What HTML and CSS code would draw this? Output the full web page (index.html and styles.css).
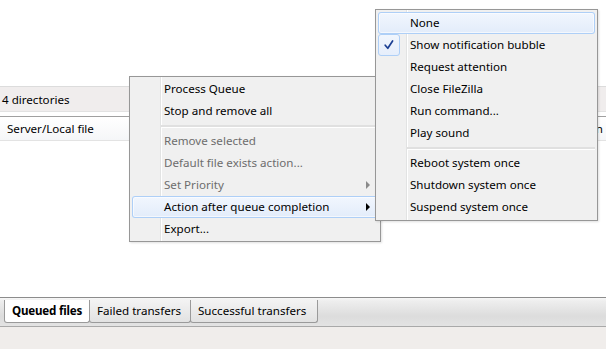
FILE: index.html
```html
<!DOCTYPE html>
<html>
<head>
<meta charset="utf-8">
<link rel="stylesheet" href="styles.css">
</head>
<body>
<div class="app">
  <div class="top"></div>
  <div class="status">4 directories</div>
  <div class="gap"></div>
  <div class="header">
    <div class="hcell">Server/Local file</div>
    <div class="hcell last">Direction</div>
  </div>
  <div class="list"></div>
  <div class="tabbar">
    <div class="tab sel t1">Queued files</div>
    <div class="tab t2">Failed transfers</div>
    <div class="tab t3">Successful transfers</div>
  </div>
  <div class="footer"></div>

  <div class="menu main">
    <div class="item"><span class="ico"></span><span class="txt">Process Queue</span></div>
    <div class="item"><span class="ico"></span><span class="txt">Stop and remove all</span></div>
    <div class="sep"></div>
    <div class="item dis"><span class="ico"></span><span class="txt">Remove selected</span></div>
    <div class="item dis"><span class="ico"></span><span class="txt">Default file exists action...</span></div>
    <div class="item dis"><span class="ico"></span><span class="txt">Set Priority</span><span class="arrow"></span></div>
    <div class="item hot"><span class="ico"></span><span class="txt">Action after queue completion</span><span class="arrow"></span></div>
    <div class="item"><span class="ico"></span><span class="txt">Export...</span></div>
  </div>

  <div class="menu sub">
    <div class="item hot"><span class="ico"></span><span class="txt">None</span></div>
    <div class="item"><span class="ico checked"><svg width="12" height="12" viewBox="0 0 12 12"><path d="M2.2 6.2 L4.8 9.3 L9.6 2" fill="none" stroke="#1b3f93" stroke-width="1.7" stroke-linecap="round" stroke-linejoin="round"/></svg></span><span class="txt">Show notification bubble</span></div>
    <div class="item"><span class="ico"></span><span class="txt">Request attention</span></div>
    <div class="item"><span class="ico"></span><span class="txt">Close FileZilla</span></div>
    <div class="item"><span class="ico"></span><span class="txt">Run command...</span></div>
    <div class="item"><span class="ico"></span><span class="txt">Play sound</span></div>
    <div class="sep"></div>
    <div class="item"><span class="ico"></span><span class="txt">Reboot system once</span></div>
    <div class="item"><span class="ico"></span><span class="txt">Shutdown system once</span></div>
    <div class="item"><span class="ico"></span><span class="txt">Suspend system once</span></div>
  </div>
</div>
</body>
</html>
```

FILE: styles.css
```css
* { box-sizing: border-box; }
html, body {
  margin: 0;
  padding: 0;
  width: 606px;
  height: 349px;
  overflow: hidden;
  background: #fff;
}
.app {
  position: relative;
  width: 606px;
  height: 349px;
  display: flex;
  flex-direction: column;
  font-family: "Noto Sans", "Open Sans", sans-serif;
  font-size: 11.6px;
  color: #000;
}
.top { height: 86px; flex: none; background: #fff; }
.status {
  height: 26px;
  flex: none;
  border-top: 1px solid #dcdcdc;
  border-bottom: 1px solid #e2e2e2;
  background: #f0eded;
  padding-left: 2px;
  display: flex;
  align-items: center;
}
.gap { height: 4px; flex: none; background: #fff; }
.header {
  height: 25px;
  flex: none;
  border-top: 1px solid #a0a0a0;
  border-bottom: 1px solid #e3e3e3;
  background: linear-gradient(#ffffff, #f5f6f8);
  display: flex;
  align-items: center;
}
.hcell { padding-left: 7px; }
.hcell.last { margin-left: auto; padding-right: 3px; }
.list { flex: 1; background: #fff; }
.tabbar {
  height: 30px;
  flex: none;
  border-top: 1px solid #8c8c8c;
  border-bottom: 1px solid #a9a9a9;
  background: linear-gradient(#f7f7f7 0px, #eeeeee 3px, #dcdcdc 65%, #e3e3e3 100%);
  display: flex;
  align-items: flex-start;
  padding-left: 4px;
  padding-top: 2px;
}
.tab {
  height: 23px;
  padding: 0 0 1px 7px;
  display: flex;
  align-items: center;
  border: 1px solid #9a9a9a;
  border-top: none;
  border-radius: 0 0 3px 3px;
  background: linear-gradient(#f3f3f3, #e2e2e2);
  margin-left: -1px;
  white-space: nowrap;
  overflow: hidden;
}
.tab.t1 { margin-left: 0; width: 86px; }
.tab.t2 { width: 102px; }
.tab.t3 { width: 128px; }
.tab.sel {
  background: #fff;
  font-weight: bold;
  letter-spacing: -0.2px;
}
.footer { height: 22px; flex: none; background: #f0edeb; }

.menu {
  position: absolute;
  background:
    linear-gradient(to right, transparent 30px, #e2e3e3 30px, #e2e3e3 31px, #ffffff 31px, #ffffff 32px, transparent 32px),
    #f0f0f0;
  border: 1px solid #979797;
  box-shadow: 1px 1px 2px rgba(0,0,0,0.12);
}
.menu.main { left: 129px; top: 76px; width: 252px; padding: 1px 2px 1px 2px; }
.menu.sub { left: 375px; top: 9px; width: 223px; padding: 2px 2px; }
.item {
  height: 22px;
  display: flex;
  align-items: center;
  border-radius: 3px;
  white-space: nowrap;
}
.item.dis { color: #6d6d6d; }
.item.hot {
  background: linear-gradient(#f2f7fe, #e2ecfa);
  box-shadow: inset 0 0 0 1px #aecff7, inset 0 0 0 2px rgba(255,255,255,0.6);
}
.ico {
  width: 22px;
  height: 22px;
  flex: none;
  margin-right: 10px;
  display: flex;
  align-items: center;
  justify-content: center;
}
.ico.checked {
  border: 1px solid #aecff7;
  border-radius: 3px;
  background: linear-gradient(#f1f6fd, #e6eefb);
}
.txt { flex: none; padding-bottom: 1px; }
.arrow {
  margin-left: auto;
  margin-right: 8px;
  width: 0;
  height: 0;
  border-top: 4px solid transparent;
  border-bottom: 4px solid transparent;
  border-left: 4px solid #000;
}
.item.dis .arrow { border-left-color: #8a8a8a; }
.sep {
  height: 8px;
  margin-left: 29px;
  display: flex;
  flex-direction: column;
  justify-content: center;
}
.sep::before {
  content: "";
  display: block;
  background: #e0e0e0;
  border-bottom: 1px solid #fff;
  height: 2px;
}
```
